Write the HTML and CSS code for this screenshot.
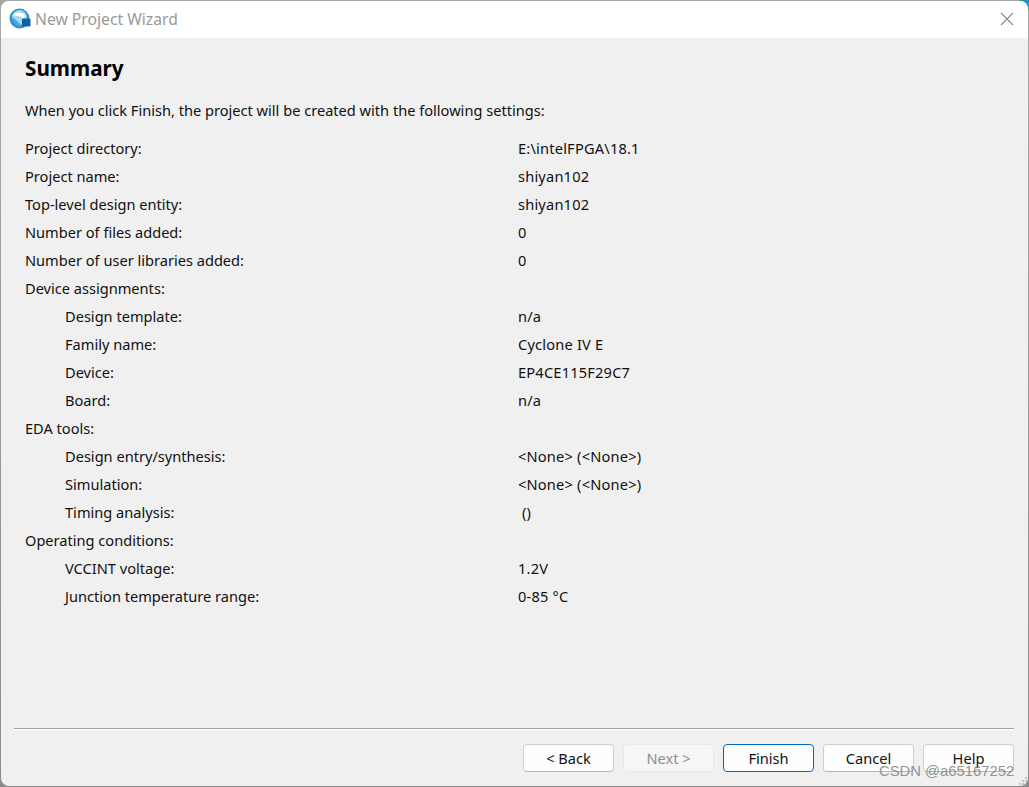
FILE: index.html
```html
<!DOCTYPE html>
<html lang="en">
<head>
<meta charset="utf-8">
<title>New Project Wizard</title>
<link rel="stylesheet" href="styles.css">
</head>
<body>
<div class="corner"></div>
<div class="window">
  <header class="titlebar">
    <svg class="logo" width="22" height="22" viewBox="0 0 22 22">
      <circle cx="10.5" cy="10.5" r="10" fill="#2a90d2"/>
      <circle cx="10.5" cy="9.5" r="7.5" fill="#a9d8f2"/>
      <path d="M3.5 8C6 4 11 3.5 15 6c1 1 1 3 0 5-3-3-7-4-11.500-3z" fill="#fff"/>
      <path d="M3.500 9c3 3 6 5 9 9-5 1-10-3-9-9z" fill="#45a5de"/>
      <rect x="13" y="10.500" width="8.500" height="8" rx="1" fill="#0b62a8"/>
    </svg>
    <span class="title">New Project Wizard</span>
    <svg class="close" width="14" height="14" viewBox="0 0 14 14"><path d="M1 1l12 12M13 1L1 13" stroke="#8a8a8a" stroke-width="1.1" fill="none"/></svg>
  </header>
  <main class="content">
    <h1 class="heading">Summary</h1>
    <p class="intro">When you click Finish, the project will be created with the following settings:</p>
    <div class="settings">
      <span>Project directory:</span><span class="val">E:\intelFPGA\18.1</span>
      <span>Project name:</span><span class="val">shiyan102</span>
      <span>Top-level design entity:</span><span class="val">shiyan102</span>
      <span>Number of files added:</span><span class="val">0</span>
      <span>Number of user libraries added:</span><span class="val">0</span>
      <span>Device assignments:</span><span></span>
      <span class="sub">Design template:</span><span class="val">n/a</span>
      <span class="sub">Family name:</span><span class="val">Cyclone IV E</span>
      <span class="sub">Device:</span><span class="val">EP4CE115F29C7</span>
      <span class="sub">Board:</span><span class="val">n/a</span>
      <span>EDA tools:</span><span></span>
      <span class="sub">Design entry/synthesis:</span><span class="val">&lt;None&gt; (&lt;None&gt;)</span>
      <span class="sub">Simulation:</span><span class="val">&lt;None&gt; (&lt;None&gt;)</span>
      <span class="sub">Timing analysis:</span><span class="val nudge">()</span>
      <span>Operating conditions:</span><span></span>
      <span class="sub">VCCINT voltage:</span><span class="val">1.2V</span>
      <span class="sub">Junction temperature range:</span><span class="val">0-85 °C</span>
    </div>
  </main>
  <footer class="footer">
    <div class="rule"></div>
    <div class="buttons">
      <button class="btn">&lt; Back</button>
      <button class="btn disabled">Next &gt;</button>
      <button class="btn primary">Finish</button>
      <button class="btn">Cancel</button>
      <button class="btn">Help</button>
    </div>
  </footer>
  <svg class="grip" width="10" height="10" viewBox="0 0 10 10"><path d="M7 1h2v2H7zM4 4h2v2H4zM7 4h2v2H7zM1 7h2v2H1zM4 7h2v2H4zM7 7h2v2H7z" fill="#c4c4c4"/></svg>
</div>
<div class="watermark">CSDN @a65167252</div>
</body>
</html>
```
FILE: styles.css
```css
* { box-sizing: border-box; }
html, body { margin: 0; height: 100%; }
body {
  width: 1029px;
  height: 787px;
  overflow: hidden;
  position: relative;
  background: linear-gradient(to bottom, #a8a8a8, #8c8c8c);
  padding: 1px;
  font-family: "Noto Sans", sans-serif;
  font-size: 14.6px;
  color: #111;
}
.corner {
  position: absolute;
  top: 0;
  right: 0;
  width: 10px;
  height: 10px;
  background: linear-gradient(45deg, #35b83a 40%, #1f8fd8 70%);
}
.window {
  position: relative;
  height: 785px;
  background: #f0f0f0;
  border-radius: 8px;
  overflow: hidden;
  display: flex;
  flex-direction: column;
}
.titlebar {
  height: 37px;
  background: #fff;
  display: flex;
  align-items: center;
  padding: 0 14px 2px 8px;
  flex: none;
}
.logo { flex: none; }
.title {
  margin-left: 4px;
  font-size: 15.7px;
  color: #9a9a9a;
  flex: 1;
}
.close { flex: none; }
.content {
  flex: 1;
  padding: 0 24px;
}
.heading {
  margin: 16px 0 0;
  font-size: 20.7px;
  line-height: 28px;
  font-weight: 700;
  color: #000;
}
.intro {
  margin: 14px 0 0;
  line-height: 28px;
}
.settings {
  margin-top: 10px;
  display: grid;
  grid-template-columns: 493px 1fr;
  grid-auto-rows: 28px;
  align-items: center;
}
.sub { padding-left: 40px; }
.val { letter-spacing: 0.2px; }
.nudge { padding-left: 4px; }
.footer {
  flex: none;
  padding: 0 14px 14px 13px;
}
.rule {
  height: 2px;
  background: linear-gradient(to bottom, #a0a0a0 50%, #fff 50%);
}
.buttons {
  margin-top: 14px;
  display: flex;
  justify-content: flex-end;
  gap: 9px;
}
.btn {
  width: 91px;
  height: 28px;
  padding: 0;
  background: #fdfdfd;
  border: 1px solid #d0d0d0;
  border-bottom-color: #b8b8b8;
  border-radius: 4px;
  font: inherit;
  color: #111;
}
.btn.disabled {
  background: #f6f6f6;
  border-color: #e8e8e8;
  color: #8e8e8e;
}
.btn.primary { border-color: #0067c0; }
.grip { position: absolute; right: 0; bottom: 0; }
.watermark {
  position: absolute;
  left: 879px;
  top: 762px;
  font-family: "Liberation Sans", sans-serif;
  font-size: 14.8px;
  line-height: 18px;
  color: rgba(120, 120, 120, 0.8);
}
```
